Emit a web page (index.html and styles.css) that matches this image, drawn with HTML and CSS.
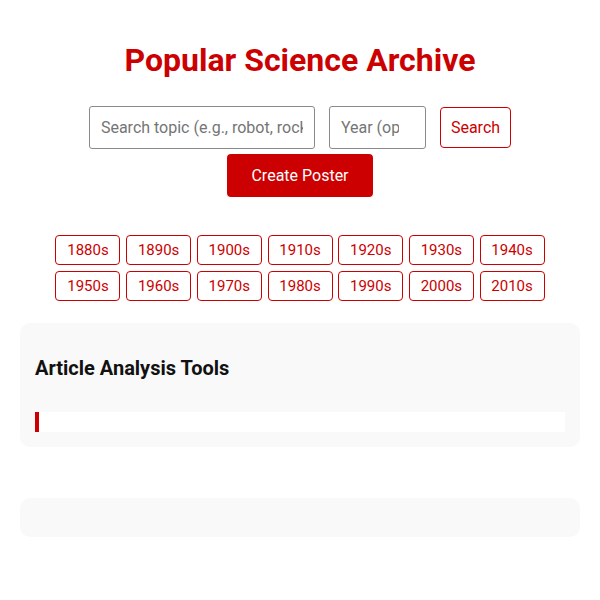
FILE: index.html
```html
<!DOCTYPE html>
<html lang="en">
<head>
  <meta charset="UTF-8" />
  <meta name="viewport" content="width=device-width, initial-scale=1.0"/>
  <title>Popular Science Archive</title>
  <link rel="stylesheet" href="styles.css">
</head>
<body>

  <div class="container">
    <h1>Popular Science Archive</h1>

    <form id="searchForm" class="search-row">
      <input type="text" class="topic" id="topic" placeholder="Search topic (e.g., robot, rocket)" />
      <input type="number" class="year" id="year" placeholder="Year (optional)" />
      <button type="submit" class="btn-outline">Search</button>
    </form>
    <div class="poster-row">
      <button type="button" class="btn-primary" id="posterBtn">Create Poster</button>
    </div>

    <div class="decades" id="decades">
      <button class="decade">1880s</button>
      <button class="decade">1890s</button>
      <button class="decade">1900s</button>
      <button class="decade">1910s</button>
      <button class="decade">1920s</button>
      <button class="decade">1930s</button>
      <button class="decade">1940s</button>
      <button class="decade">1950s</button>
      <button class="decade">1960s</button>
      <button class="decade">1970s</button>
      <button class="decade">1980s</button>
      <button class="decade">1990s</button>
      <button class="decade">2000s</button>
      <button class="decade">2010s</button>
    </div>

    <div class="panel tools">
      <h2>Article Analysis Tools</h2>
      <div class="progress"></div>
    </div>

    <div class="panel results" id="results"></div>
  </div>

</body>
</html>
```

FILE: styles.css
```css
body {
  font-family: Roboto, 'Liberation Sans', sans-serif;
  margin: 0;
  padding: 0;
  background: #fff;
  color: #111;
}

.container {
  padding: 20px;
}

h1 {
  font-size: 32px;
  font-weight: 700;
  color: #c00;
  text-align: center;
  margin: 21px 0 27px;
  line-height: 38px;
}

.search-row {
  display: flex;
  justify-content: center;
  align-items: center;
  gap: 14px;
  margin: 0;
}

.search-row input {
  height: 43px;
  box-sizing: border-box;
  padding: 0 11px;
  font-family: inherit;
  font-size: 16px;
  color: #333;
  border: 1px solid #8a8a8a;
  border-radius: 3px;
}

.search-row input::placeholder {
  color: #757575;
}

.topic {
  width: 226px;
}

.year {
  width: 97px;
}

.btn-outline {
  height: 41px;
  padding: 0 10px;
  font-family: inherit;
  font-size: 16px;
  color: #c00;
  background: #fff;
  border: 1px solid #c00;
  border-radius: 4px;
  cursor: pointer;
}

.poster-row {
  display: flex;
  justify-content: center;
  margin-top: 5px;
}

.btn-primary {
  width: 146px;
  height: 43px;
  font-family: inherit;
  font-size: 16px;
  color: #fff;
  background: #c00;
  border: none;
  border-radius: 4px;
  cursor: pointer;
}

.decades {
  display: grid;
  grid-template-columns: repeat(7, 65px);
  gap: 6px 5.7px;
  justify-content: center;
  margin: 38px 0 22px;
}

.decade {
  height: 30px;
  padding: 0;
  font-family: inherit;
  font-size: 15px;
  color: #c00;
  background: #fff;
  border: 1px solid #c00;
  border-radius: 4px;
  cursor: pointer;
}

.panel {
  background: #f9f9f9;
  border-radius: 10px;
  padding: 15px;
}

.panel h2 {
  font-size: 20px;
  font-weight: 700;
  color: #111;
  margin: 19px 0 32px;
  line-height: 23px;
}

.progress {
  height: 20px;
  background: #fff;
  border-left: 4px solid #c00;
}

.results {
  margin-top: 51px;
  height: 9px;
}
```
